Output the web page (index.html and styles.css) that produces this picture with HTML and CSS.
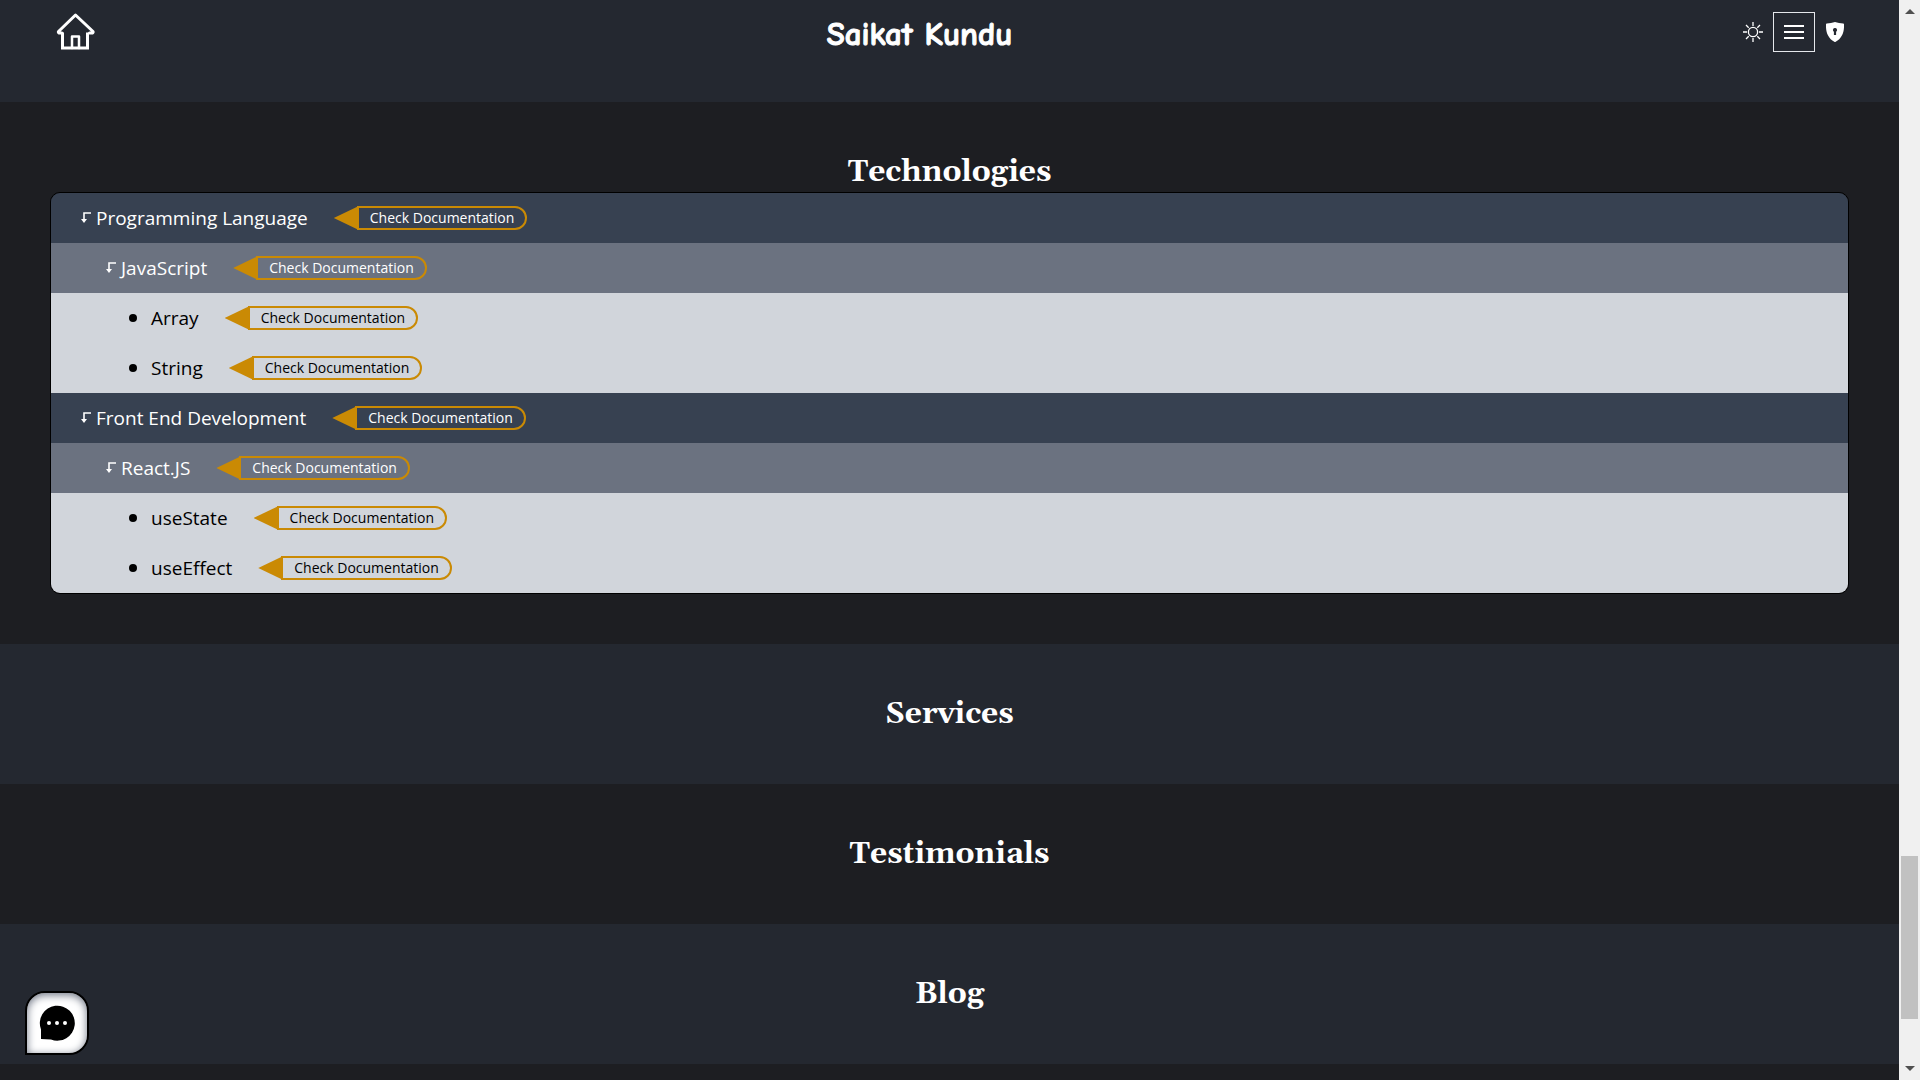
FILE: index.html
```html
<!DOCTYPE html>
<html lang="en">
<head>
<meta charset="utf-8">
<meta name="viewport" content="width=device-width, initial-scale=1">
<title>Saikat Kundu</title>
<link rel="stylesheet" href="styles.css">
</head>
<body>
<svg class="sprite">
  <symbol id="turn" viewBox="0 0 12 12"><path d="M11 1H4v7" fill="none" stroke="currentColor" stroke-width="1.6"/><path d="M1 7h6L4 11z" fill="currentColor"/></symbol>
</svg>
<div class="page">
  <div class="content">
    <header class="topbar">
      <a class="home" href="#" aria-label="Home">
        <svg width="40" height="40" viewBox="0 0 40 40" fill="none" stroke="currentColor" stroke-width="3" stroke-linejoin="round" stroke-linecap="round"><path d="M6 21H3a1 1 0 0 1-.5-1.500L19.500 3l17.500 16.500a1 1 0 0 1-.5 1.500h-3" /><path d="M6.500 20.500V36h25V20.500" stroke-linejoin="miter" stroke-linecap="butt"/><path d="M16 36V24.500h7V36" stroke-width="2.500"/></svg>
      </a>
      <h1 class="brand">Saikat Kundu</h1>
      <div class="tools">
        <button class="tool" aria-label="Toggle theme">
          <svg width="20" height="20" viewBox="0 0 20 20" fill="none" stroke="currentColor" stroke-width="1.300"><circle cx="10" cy="10" r="4.600"/><path d="M10 0v4M10 16v4M0 10h4M16 10h4M3 3l2.700 2.700M14.300 14.300 17 17M3 17l2.700-2.700M14.300 5.700 17 3"/></svg>
        </button>
        <button class="tool menu" aria-label="Menu">
          <svg width="20" height="14" viewBox="0 0 20 14" fill="currentColor"><path d="M0 0h20v2H0zM0 6h20v2H0zM0 12h20v2H0z"/></svg>
        </button>
        <button class="tool" aria-label="Admin">
          <svg width="18" height="20" viewBox="0 0 18 20" fill="currentColor"><path fill-rule="evenodd" d="M9 0c2.500.8 5.500 1.300 8.200 1.400q.8.100.8.900c.4 7.700-1.900 14-8.300 17.500q-.7.400-1.400 0C1.900 16.300-.4 10 0 2.300q0-.8.800-.9C3.500 1.300 6.500.8 9 0zM9 6a2 2 0 0 0-1.100 3.700V13h2.200V9.700A2 2 0 0 0 9 6z"/></svg>
        </button>
      </div>
    </header>
    <main>
      <section class="section dark">
        <h2 class="title">Technologies</h2>
        <ul class="tree">
          <li>
            <div class="row one"><button class="toggle"><svg class="turn"><use href="#turn"/></svg>Programming Language</button><a class="doc" href="#">Check Documentation</a></div>
            <ul>
              <li>
                <div class="row two"><button class="toggle"><svg class="turn"><use href="#turn"/></svg>JavaScript</button><a class="doc" href="#">Check Documentation</a></div>
                <ul>
                  <li class="row three"><span class="leaf">Array</span><a class="doc" href="#">Check Documentation</a></li>
                  <li class="row three"><span class="leaf">String</span><a class="doc" href="#">Check Documentation</a></li>
                </ul>
              </li>
            </ul>
          </li>
          <li>
            <div class="row one"><button class="toggle"><svg class="turn"><use href="#turn"/></svg>Front End Development</button><a class="doc" href="#">Check Documentation</a></div>
            <ul>
              <li>
                <div class="row two"><button class="toggle"><svg class="turn"><use href="#turn"/></svg>React.JS</button><a class="doc" href="#">Check Documentation</a></div>
                <ul>
                  <li class="row three"><span class="leaf">useState</span><a class="doc" href="#">Check Documentation</a></li>
                  <li class="row three"><span class="leaf">useEffect</span><a class="doc" href="#">Check Documentation</a></li>
                </ul>
              </li>
            </ul>
          </li>
        </ul>
      </section>
      <section class="section"><h2 class="title">Services</h2></section>
      <section class="section dark"><h2 class="title">Testimonials</h2></section>
      <section class="section"><h2 class="title">Blog</h2></section>
    </main>
  </div>
  <div class="scrollbar" aria-hidden="true">
    <svg class="arrow" viewBox="0 0 10 5"><path d="M0 5 5 0l5 5z" fill="currentColor"/></svg>
    <div class="track"><div class="thumb"></div></div>
    <svg class="arrow" viewBox="0 0 10 5"><path d="M0 0h10L5 5z" fill="currentColor"/></svg>
  </div>
</div>
<button class="chat" aria-label="Open chat">
  <svg width="36" height="36" viewBox="0 0 36 36"><path d="M2 34V24.500A17.500 17.500 0 1 1 12 34.500z" fill="#000"/><g fill="#fff"><circle cx="10" cy="18" r="2"/><circle cx="18" cy="18" r="2"/><circle cx="26" cy="18" r="2"/></g></svg>
</button>
</body>
</html>
```
FILE: styles.css
```css
* { box-sizing: border-box; margin: 0; padding: 0; }

body {
  background: #1d1e22;
  color: #fff;
  font-family: "Segoe UI", "Open Sans", sans-serif;
  font-size: 19px;
}

ul { list-style: none; }
button { background: none; border: 0; color: inherit; font: inherit; cursor: pointer; }
a { color: inherit; text-decoration: none; }
svg { display: block; }
.sprite { display: none; }

.page { display: flex; height: 100vh; overflow: hidden; }
.content { flex: 1; min-width: 0; }

.topbar {
  display: flex;
  justify-content: space-between;
  align-items: flex-start;
  padding: 12px 55px 0 56px;
  min-height: 102px;
  background: #242830;
}
.brand {
  font-family: "Comic Neue", "Comic Sans MS", Lato, sans-serif;
  font-size: 33px;
  font-weight: 700;
  line-height: 44px;
  -webkit-text-stroke: 1px #fff;
}
.tools { display: flex; align-items: center; }
.tool { display: grid; place-items: center; height: 40px; }
.tool:first-child { padding-right: 10px; }
.tool:last-child { padding-left: 11px; }
.menu { width: 42px; border: 1px solid #e5e7eb; }

.section { padding: 50px; background: #242830; }
.dark { background: #1d1e22; }
.title {
  font-family: Georgia, Gelasio, "Liberation Serif", serif;
  font-size: 30px;
  line-height: 40px;
  text-align: center;
}

.tree { border: 1px solid #000; border-radius: 10px; overflow: hidden; }
.row { display: flex; align-items: center; gap: 49px; height: 50px; }
.one { padding-left: 29px; background: #374151; }
.two { padding-left: 54px; background: #6b7280; }
.three { padding-left: 78px; background: #d1d5db; color: #000; }
.toggle { display: flex; align-items: center; gap: 4px; }
.turn { width: 12px; height: 12px; }
.leaf { display: flex; align-items: center; gap: 14px; }
.leaf::before { content: ""; width: 8px; height: 8px; border-radius: 50%; background: #000; }

.doc {
  position: relative;
  height: 24px;
  padding: 0 11px;
  border: 2px solid #ca8a04;
  border-radius: 0 12px 12px 0;
  font-size: 14px;
  line-height: 20px;
}
.doc::before {
  content: "";
  position: absolute;
  top: -2px;
  right: 100%;
  width: 25px;
  height: 24px;
  background: #ca8a04;
  clip-path: polygon(0 50%, 100% 0, 100% 100%);
}

.scrollbar {
  display: flex;
  flex-direction: column;
  align-items: center;
  width: 21px;
  padding: 9px 2px;
  background: #f0f0f0;
  color: #505050;
}
.arrow { width: 10px; height: 5px; }
.track { flex: 1; align-self: stretch; display: grid; grid-template-rows: 842fr 163fr 47fr; }
.thumb { grid-row: 2; background: #c1c1c1; }

.chat {
  position: fixed;
  left: 25px;
  bottom: 25px;
  display: grid;
  place-items: center;
  width: 64px;
  height: 64px;
  border: 2px solid #000;
  border-radius: 20px 20px 20px 0;
  background: #fff;
  box-shadow: inset 0 2px 8px #6b7280;
}
```
